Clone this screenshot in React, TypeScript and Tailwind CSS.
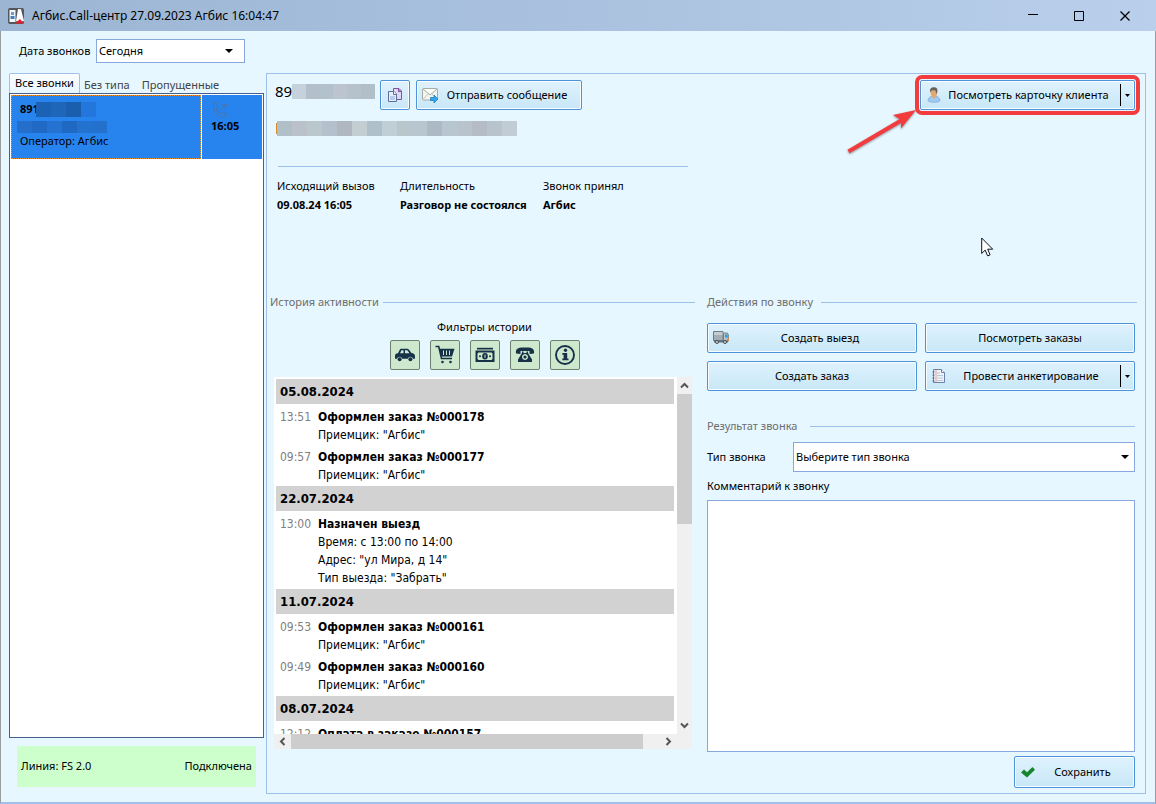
import type { ReactNode } from "react";

interface Entry {
  time: string;
  title: string;
  lines: string[];
}

interface Day {
  date: string;
  entries: Entry[];
}

const history: Day[] = [
  {
    date: "05.08.2024",
    entries: [
      { time: "13:51", title: "Оформлен заказ №000178", lines: ['Приемцик: "Агбис"'] },
      { time: "09:57", title: "Оформлен заказ №000177", lines: ['Приемцик: "Агбис"'] },
    ],
  },
  {
    date: "22.07.2024",
    entries: [
      {
        time: "13:00",
        title: "Назначен выезд",
        lines: ["Время: с 13:00 по 14:00", 'Адрес: "ул Мира, д 14"', 'Тип выезда: "Забрать"'],
      },
    ],
  },
  {
    date: "11.07.2024",
    entries: [
      { time: "09:53", title: "Оформлен заказ №000161", lines: ['Приемцик: "Агбис"'] },
      { time: "09:49", title: "Оформлен заказ №000160", lines: ['Приемцик: "Агбис"'] },
    ],
  },
  {
    date: "08.07.2024",
    entries: [{ time: "12:12", title: "Оплата в заказе №000157", lines: [] }],
  },
];

// Colours of the blocks that hide personal data
const phoneMask = ["bg-[#c5d2dc]", "bg-[#b3bfca]", "bg-[#b2c1cb]", "bg-[#bbc4cf]", "bg-[#b5c1cb]", "bg-[#b0bfc8]"];
const nameMask = [
  "bg-[#b0bfc8]", "bg-[#bac1cb]", "bg-[#bac8ce]", "bg-[#b4c1cc]", "bg-[#b0b7c1]", "bg-[#c2ced1]", "bg-[#b0c0ca]", "bg-[#c0ced5]",
  "bg-[#b9c6cc]", "bg-[#b7c6cf]", "bg-[#adbac5]", "bg-[#b8c6cf]", "bg-[#b8c3cb]", "bg-[#b5bcc5]", "bg-[#b7c3cd]", "bg-[#c1ccd5]",
];
const listPhoneMask = ["bg-[#1b62b4]", "bg-[#1d66ba]", "bg-[#1a5fae]", "bg-[#2377dc]"];
const listNameMask = ["bg-[#236fcb]", "bg-[#2069c4]", "bg-[#2472d2]", "bg-[#1f69c2]", "bg-[#2472d0]", "bg-[#2370cd]"];

function Mask({ colors, className }: { colors: string[]; className: string }) {
  return (
    <span className={`flex overflow-hidden ${className}`} aria-hidden="true">
      {colors.map((c, i) => (
        <span key={i} className={`flex-1 ${c}`} />
      ))}
    </span>
  );
}

const face =
  "border border-[#4f92dc] rounded-[2px] bg-linear-to-b from-[#dff2fd] to-[#c8e7f7] shadow-[inset_0_0_0_1px_#f8fdff]";

function Button({ icon, children, className = "" }: { icon?: ReactNode; children: ReactNode; className?: string }) {
  return (
    <button className={`flex items-center px-[5px] whitespace-nowrap ${face} ${className}`}>
      {icon}
      <span className="flex-1 text-center">{children}</span>
    </button>
  );
}

function SplitButton({ icon, label, className = "" }: { icon: ReactNode; label: string; className?: string }) {
  return (
    <div className={`flex h-[30px] items-center ${face} ${className}`}>
      <button className="flex flex-1 h-full items-center px-[5px] whitespace-nowrap">
        {icon}
        <span className="flex-1 text-center">{label}</span>
      </button>
      <button className="flex h-[22px] w-[14px] items-center justify-center border-l border-black" aria-label="Ещё">
        <Triangle className="w-[5px] h-[3px]" />
      </button>
    </div>
  );
}

function Triangle({ className }: { className: string }) {
  return (
    <svg className={className} viewBox="0 0 8 4" preserveAspectRatio="none">
      <path d="M0 0h8L4 4z" fill="#000" />
    </svg>
  );
}

function GroupTitle({ children, className = "" }: { children: ReactNode; className?: string }) {
  return (
    <h2 className={`flex items-center h-4 text-[11px] text-[#6d6d6d] ${className}`}>
      <span className="whitespace-nowrap">{children}</span>
      <span className="flex-1 h-px bg-[#a0c0ec]" />
    </h2>
  );
}

function Chevron({ d }: { d: string }) {
  return (
    <svg className="w-[9px] h-[9px]" viewBox="0 0 9 9" fill="none" stroke="#555" strokeWidth="2">
      <path d={d} />
    </svg>
  );
}

const CopyIcon = (
  <svg className="w-4 h-4" viewBox="0 0 16 16">
    <path d="M6.500 1.500h5.500L14.500 4v8.500h-8z" fill="#e0d6f0" stroke="#7d559d" />
    <path d="M11.500 1.500v3h3" fill="#a884c4" stroke="#7d559d" />
    <path d="M1.500 4.500h5.500L9.500 7v7.500h-8z" fill="#e6eefb" stroke="#5c6c9e" />
    <path d="M6.500 4.500v3h3" fill="#fff" stroke="#5c6c9e" />
    <path d="M3 9h5v4H3z" fill="#b9cdea" />
  </svg>
);

const MailIcon = (
  <svg className="w-4 h-4" viewBox="0 0 16 16">
    <rect x=".5" y="1.500" width="15" height="11.500" rx="1" fill="#f3f5ef" stroke="#a4aca4" />
    <path d="M1 12.500 6 7m9 5.500L10 7" stroke="#c3c9c0" fill="none" />
    <path d="m1 2 7 6 7-6" fill="#fcfdf8" stroke="#a4aca4" />
    <path d="M8.500 10.500H12V8l4 4-4 4v-2.500H8.500z" fill="#36a7ee" stroke="#1475b8" strokeWidth=".7" />
  </svg>
);

const UserIcon = (
  <svg className="w-4 h-4" viewBox="0 0 16 16">
    <path d="M2 13.500C2 10.500 5 9.500 6 9h4c2 .5 4 2 4 4.500 0 2.500-12 2.500-12 0z" fill="#9fc8f2" stroke="#74a2d4" strokeWidth=".6" />
    <path d="M6 8h4l-.5 2.500L8 12l-2-2z" fill="#e3ac74" />
    <path d="M4.500 3h6.500v4c0 2-1.500 3-3 3S4.500 8 4.500 6z" fill="#dfa870" />
    <path d="M4 5c-.5-3 1-4.800 3.700-4.800S12 1.500 11.300 5L10.500 7 9.500 3.500 6 3 5 4.500z" fill="#66605b" />
  </svg>
);

const TruckIcon = (
  <svg className="w-4 h-4" viewBox="0 0 16 16">
    <path d="M.5 1.500h9.500v9H.5z" fill="#a4aeb5" stroke="#6e7b84" />
    <path d="M1 2h8.500v3H1z" fill="#c5ccd0" />
    <path d="M10.500 3h4l1.200 3v5h-5.200z" fill="#b8c4cc" stroke="#65727c" strokeWidth=".8" />
    <path d="M12 4.500h2.500l.5 3h-3z" fill="#2c9fe0" />
    <path d="M14 8.500h2v2h-2z" fill="#ef8a2d" />
    <path d="M1 10.500h14v2H1z" fill="#66717a" />
    <circle cx="4" cy="12" r="1.500" fill="#ddd" stroke="#454b50" />
    <circle cx="12" cy="12" r="1.500" fill="#ddd" stroke="#454b50" />
  </svg>
);

const FormIcon = (
  <svg className="w-4 h-4" viewBox="0 0 16 16">
    <path d="M2.500 1.500h8l3 3v10h-11z" fill="#eef3fb" stroke="#6e81a8" />
    <path d="M10.500 1.500v3h3" fill="#fff" stroke="#6e81a8" />
    <path d="M6 5h3M6 7.500h6M6 10h6M6 12.500h6" stroke="#b7c7e1" />
    <path d="M5 2v12" stroke="#e8a08c" />
    <path d="M1.500 4h2m-2 3h2m-2 3h2m-2 3h2" stroke="#545f80" />
  </svg>
);

const filters: { label: string; art: ReactNode }[] = [
  {
    label: "Выезды",
    art: (
      <>
        <path
          fillRule="evenodd"
          d="M0 11c0-1.700.8-2.500 3-2.800l1.500-3C5 4.200 5.500 3.800 6.500 3.800h5.500c1 0 1.500.3 2.200 1.200L16.500 8c2.200.3 3.500 1 3.500 3.500v2.300h-2a2.700 2.700 0 0 0-5.200 0H7.200a2.700 2.700 0 0 0-5.200 0H0zM5 8.200h3.500V5.300H6.500zM10 5.300v2.900h4.500l-2.200-2.900z"
        />
        <circle cx="4.600" cy="14.300" r="2" />
        <circle cx="15.400" cy="14.300" r="2" />
      </>
    ),
  },
  {
    label: "Заказы",
    art: (
      <>
        <path d="M.5 1.500h3.200L6.500 13.500H17" fill="none" stroke="#173248" strokeWidth="1.600" />
        <path d="M4.500 3.800h15L17 11.500H6z" />
        <path d="M8.500 5.500v4.500M11.500 5.500v4.500M14.500 5.500v4.500" stroke="#cde8cd" />
        <circle cx="7.500" cy="17" r="1.300" />
        <circle cx="15.500" cy="17" r="1.300" />
      </>
    ),
  },
  {
    label: "Оплаты",
    art: (
      <>
        <path d="M2 2.800h16v1.700H2z" />
        <path fillRule="evenodd" d="M.5 5.500h19v11.500H.5zM3.500 7.500l-1 1v5.500l1 1h13l1-1V8.500l-1-1z" />
        <ellipse cx="10" cy="11.200" rx="2.800" ry="3.200" />
        <circle cx="5" cy="11.200" r="1" />
        <circle cx="15" cy="11.200" r="1" />
        <path d="M10 9.700v3" stroke="#cde8cd" />
      </>
    ),
  },
  {
    label: "Звонки",
    art: (
      <>
        <path d="M1 8.500C0 2.500 5 2.500 10 2.500s10 0 9 6l-4.500.5v-3h-9v3z" />
        <path fillRule="evenodd" d="M7 6.500h1.500V8h3V6.500H13V8l4 6.500V17H3v-2.500L7 8zM10 9a3 3 0 1 0 .01 0z" />
        <circle cx="10" cy="12" r="1.600" />
      </>
    ),
  },
  {
    label: "Информация",
    art: (
      <>
        <circle cx="10" cy="10" r="9" fill="none" stroke="#173248" strokeWidth="1.900" />
        <circle cx="10.500" cy="5.300" r="1.700" />
        <path d="M7.300 8h4.900v5.500h1.300V15.200H7.300v-1.700h1.300V9.700H7.300z" />
      </>
    ),
  },
];

function TitleBar() {
  return (
    <header className="flex h-[31px] shrink-0 items-center bg-linear-to-r from-[#9bb5d3] to-[#b9cfeb] px-2">
      <svg className="w-4 h-4" viewBox="0 0 16 16">
        <rect width="16" height="16" rx="2" fill="#53565a" />
        <path d="M1.500 2h6v12h-6z" fill="#f3f7fb" />
        <path d="M3 4h3v3H3z" fill="#6c9dd0" />
        <path d="M2.500 8h4v3h-4z" fill="#4281bd" />
        <path d="m10 1 3 .3L16 13l-5 1-3-1z" fill="#fff" />
        <path d="M7 15.500 12 11l4 4.500z" fill="#e41f2d" />
      </svg>
      <h1 className="ml-2 flex-1 text-[12px]">Агбис.Call-центр 27.09.2023 Агбис 16:04:47</h1>
      <div className="flex">
        <button className="flex w-[46px] h-6 items-center justify-center" aria-label="Свернуть">
          <svg className="w-[11px] h-[11px]" viewBox="0 0 11 11"><path d="M0 4.500h10" stroke="#000" /></svg>
        </button>
        <button className="flex w-[46px] h-6 items-center justify-center" aria-label="Развернуть">
          <svg className="w-[10px] h-[10px]" viewBox="0 0 10 10"><path d="M.5.5h9v9h-9z" fill="none" stroke="#000" /></svg>
        </button>
        <button className="flex w-[46px] h-6 items-center justify-center" aria-label="Закрыть">
          <svg className="w-[10px] h-[10px]" viewBox="0 0 10 10"><path d="m.5.5 9 9m0-9-9 9" stroke="#000" strokeWidth="1.300" /></svg>
        </button>
      </div>
    </header>
  );
}

function CallList() {
  return (
    <aside className="flex w-[255px] shrink-0 flex-col pb-[15px] text-[11px]">
      <div className="flex items-center pl-[10px] mb-[10px]">
        <label htmlFor="date" className="w-[77px] whitespace-nowrap">Дата звонков</label>
        <div className="relative">
          <select id="date" className="block appearance-none w-[149px] h-6 border border-[#86a8dc] bg-white pl-[2px]">
            <option>Сегодня</option>
          </select>
          <Triangle className="pointer-events-none absolute right-3 top-[10px] w-2 h-[4px]" />
        </div>
      </div>

      <nav className="flex h-5 items-end">
        <button className="h-full rounded-t-[2px] border border-b-0 border-[#a0c0ec] bg-linear-to-b from-[#fbfdff] to-[#e8f6ff] px-[5px] whitespace-nowrap">
          Все звонки
        </button>
        <button className="px-1 whitespace-nowrap text-[#444]">Без типа</button>
        <button className="px-2 whitespace-nowrap text-[#444]">Пропущенные</button>
      </nav>

      <div className="flex-1 border border-[#43608f] bg-white p-px">
        <div className="flex h-16 bg-[#2784ef]">
          <div className="flex flex-1 flex-col border border-dotted border-[#e69030] pl-[5px] pt-[6px]">
            <div className="flex h-[15px] items-center pl-[3px]">
              <span className="w-4 font-bold">891</span>
              <Mask colors={listPhoneMask} className="w-[60px] h-[15px]" />
            </div>
            <Mask colors={listNameMask} className="mt-1 w-[90px] h-3" />
            <span className="pl-[3px] leading-4">Оператор: Агбис</span>
          </div>
          <div className="flex w-[61px] flex-col border-l border-white pl-[9px] pt-[7px]">
            <svg className="ml-px w-4 h-4" viewBox="0 0 16 16" fill="none" stroke="#4a74a8" strokeWidth="1">
              <path d="M2 1 4.500.7 6 5 4 6.500c.8 2.500 2.500 4.300 5 5.300l1.700-1.800 3.800 2-.5 2.500c-4 3-15-4-12-13.500zM7.500 8 13 3.500M9.500 3l5-.5-.8 4.500" />
            </svg>
            <span className="leading-4 font-bold">16:05</span>
          </div>
        </div>
      </div>

      <div className="mx-2 mt-2 flex h-[41px] items-center justify-between bg-[#ccffcc] px-1">
        <span>Линия: FS 2.0</span>
        <span>Подключена</span>
      </div>
    </aside>
  );
}

function CallHeader() {
  return (
    <section className="h-[220px] pl-2 pr-[10px] pt-[6px] text-[11px]">
      <div className="flex h-[30px]">
        <span className="mt-px w-[17px] text-[15px] leading-5">89</span>
        <Mask colors={phoneMask} className="mt-1 mr-[5px] w-[83px] h-[15px]" />
        <button className={`mr-[6px] flex w-[30px] items-center justify-center ${face}`} aria-label="Копировать">
          {CopyIcon}
        </button>
        <Button icon={MailIcon} className="w-[166px]">Отправить сообщение</Button>
        <div className="relative ml-auto">
          <SplitButton
            icon={UserIcon}
            label="Посмотреть карточку клиента"
            className="w-[215px] outline-4 outline-offset-1 outline-[#f23c3e]"
          />
          <svg className="absolute right-full top-full w-[76px] h-[50px] drop-shadow-[0_1px_1px_#0006]" viewBox="0 0 76 50">
            <path d="M4.500 41.500 58 10" stroke="#f23c3e" strokeWidth="4.200" />
            <path d="M72 0 49 5l8 5v8.500z" fill="#f23c3e" />
          </svg>
          <svg className="absolute left-[61px] top-[157px] w-[13px] h-5" viewBox="0 0 13 20">
            <path d="M.7 1v15.500l3.500-3.400 2.400 5.800 2.500-1-2.400-5.700h5z" fill="#fff" stroke="#10131c" />
          </svg>
        </div>
      </div>
      <div className="mt-[11px] flex">
        <span className="my-[2px] ml-px w-px bg-[#d88a2a]" />
        <Mask colors={nameMask} className="w-[240px] h-[15px]" />
      </div>
      <hr className="ml-[3px] mt-[30px] w-[410px] border-[#a0c0ec]" />
      <dl className="ml-[2px] mt-[10px] grid grid-cols-[123px_143px_auto] grid-rows-[19px_19px] grid-flow-col items-center whitespace-nowrap">
        <dt>Исходящий вызов</dt>
        <dd className="font-bold">09.08.24 16:05</dd>
        <dt>Длительность</dt>
        <dd className="font-bold">Разговор не состоялся</dd>
        <dt>Звонок принял</dt>
        <dd className="font-bold">Агбис</dd>
      </dl>
    </section>
  );
}

function History() {
  return (
    <section className="flex min-h-0 flex-col pb-11">
      <GroupTitle className="gap-1">История активности</GroupTitle>
      <div className="mt-[9px] flex flex-col items-center pl-1">
        <span className="text-[11px] leading-4">Фильтры истории</span>
        <div className="mt-[5px] flex gap-[10px]">
          {filters.map((f) => (
            <button
              key={f.label}
              aria-label={f.label}
              className="flex w-[30px] h-[30px] items-center justify-center rounded-[2px] border border-[#6f8272] bg-[#cde8cd]"
            >
              <svg className="w-5 h-5" viewBox="0 0 20 20" fill="#173248">{f.art}</svg>
            </button>
          ))}
        </div>
      </div>

      <div className="ml-1 mr-[3px] mt-[7px] flex min-h-0 flex-1 flex-col">
        <div className="flex min-h-0 flex-1">
          <div className="flex-1 overflow-hidden bg-white pl-[2px] pr-[3px] pt-[2px] font-['DejaVu_Sans_Condensed','DejaVu_Sans',sans-serif] text-[12px] leading-[18px]">
            {history.map((day) => (
              <div key={day.date} className="pb-[2px]">
                <h3 className="flex h-[25px] items-center bg-[#d2d2d2] pl-1 text-[13px] font-bold">{day.date}</h3>
                {day.entries.map((e) => (
                  <div key={e.time} className="flex pt-1 pl-1">
                    <time className="w-[38px] shrink-0 text-[#808080]">{e.time}</time>
                    <div>
                      <p className="font-bold">{e.title}</p>
                      {e.lines.map((l) => (
                        <p key={l}>{l}</p>
                      ))}
                    </div>
                  </div>
                ))}
              </div>
            ))}
          </div>
          <div className="flex w-[15px] flex-col items-center bg-[#f0f0f0]">
            <span className="flex h-[17px] items-center"><Chevron d="M1 6.500 4.500 3 8 6.500" /></span>
            <span className="h-[130px] w-full bg-[#cdcdcd]" />
            <span className="mt-auto flex h-[17px] items-center"><Chevron d="M1 2.500 4.500 6 8 2.500" /></span>
          </div>
        </div>
        <div className="flex h-[15px] items-center bg-[#f0f0f0] pr-[15px]">
          <span className="flex w-[17px] justify-center"><Chevron d="M6.500 1 3 4.500 6.500 8" /></span>
          <span className="h-full flex-1 bg-[#cdcdcd]" />
          <span className="flex w-[34px] justify-end pr-1"><Chevron d="M2.500 1 6 4.500 2.500 8" /></span>
        </div>
      </div>
    </section>
  );
}

function Actions() {
  return (
    <section className="flex min-h-0 flex-col pb-[5px] pr-[10px] text-[11px]">
      <GroupTitle className="-mr-[2px] gap-2">Действия по звонку</GroupTitle>
      <div className="mt-[13px] grid grid-cols-2 auto-rows-[30px] gap-2">
        <Button icon={TruckIcon}>Создать выезд</Button>
        <Button>Посмотреть заказы</Button>
        <Button>Создать заказ</Button>
        <SplitButton icon={FormIcon} label="Провести анкетирование" />
      </div>

      <GroupTitle className="mt-[27px] gap-[13px]">Результат звонка</GroupTitle>
      <div className="mt-2 flex items-center">
        <label htmlFor="kind" className="w-[86px]">Тип звонка</label>
        <div className="relative flex-1">
          <select id="kind" className="block w-full h-[30px] appearance-none border border-[#86a8dc] bg-white pl-[2px]">
            <option>Выберите тип звонка</option>
          </select>
          <Triangle className="pointer-events-none absolute right-[6px] top-[13px] w-2 h-[4px]" />
        </div>
      </div>
      <label htmlFor="comment" className="mt-[6px] leading-4">Комментарий к звонку</label>
      <textarea id="comment" className="mt-[6px] min-h-0 flex-1 resize-none border border-[#86a8dc] bg-white p-1" />
      <Button
        className="mt-1 h-8 w-[121px] shrink-0 self-end"
        icon={
          <svg className="w-4 h-4" viewBox="0 0 16 16">
            <path d="m1 8.500 3-3 3 2.700L12.500 3 15 5.700 7 13.500z" fill="#17852c" />
          </svg>
        }
      >
        Сохранить
      </Button>
    </section>
  );
}

export default function App() {
  return (
    <div className="flex h-screen flex-col bg-[#e7f7ff] font-['Noto_Sans','Open_Sans',sans-serif] text-black">
      <TitleBar />
      <div className="flex min-h-0 flex-1 gap-[2px] border-x border-b-2 border-x-[#9a9da0] border-b-[#a0c0ec] pl-2 pr-[9px] pt-2">
        <CallList />
        <main className="mb-2 mt-[34px] flex min-w-0 flex-1 flex-col border border-[#a0c0ec]">
          <CallHeader />
          <div className="grid min-h-0 flex-1 grid-cols-[425fr_438fr] gap-3 pl-[3px]">
            <History />
            <Actions />
          </div>
        </main>
      </div>
    </div>
  );
}
